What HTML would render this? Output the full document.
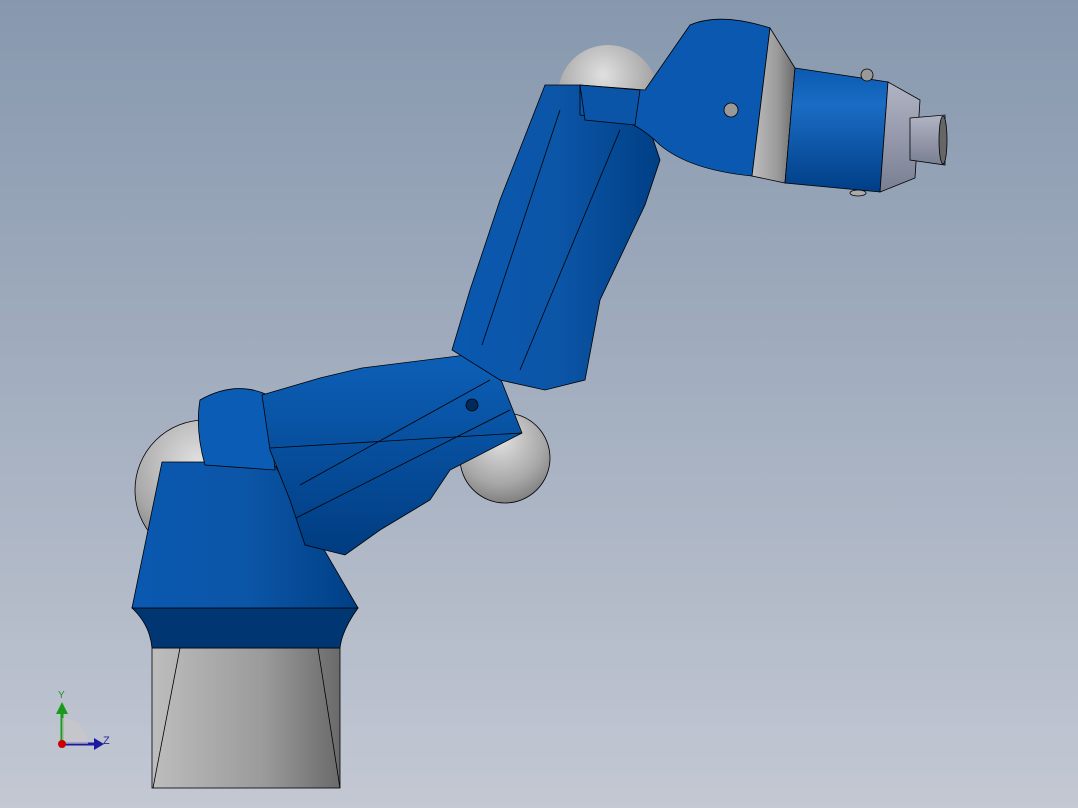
<!DOCTYPE html>
<html><head><style>
html,body{margin:0;padding:0;}
body{width:1078px;height:808px;overflow:hidden;background:linear-gradient(#8798ae 0%,#a4afc0 50%,#c3c8d3 100%);}
svg{position:absolute;left:0;top:0;}
</style></head><body>
<svg width="1078" height="808" viewBox="0 0 1078 808" font-family="Liberation Sans, sans-serif">
<defs>
<linearGradient id="gray" x1="0" x2="1"><stop offset="0" stop-color="#bdbdbd"/><stop offset="0.6" stop-color="#9a9a9a"/><stop offset="1" stop-color="#6a6a6a"/></linearGradient>
<radialGradient id="sph" cx="0.45" cy="0.3" r="0.8"><stop offset="0" stop-color="#e0e0e0"/><stop offset="0.6" stop-color="#a8a8a8"/><stop offset="1" stop-color="#707070"/></radialGradient>
<linearGradient id="blue" x1="0" x2="1"><stop offset="0" stop-color="#0a58b0"/><stop offset="0.5" stop-color="#0c56a8"/><stop offset="1" stop-color="#003f85"/></linearGradient>
<linearGradient id="blueV" x1="0" y1="0" x2="0" y2="1"><stop offset="0" stop-color="#0d60b8"/><stop offset="1" stop-color="#003c80"/></linearGradient>
<linearGradient id="cyl" x1="0" y1="0" x2="0" y2="1"><stop offset="0" stop-color="#0a5ab0"/><stop offset="0.3" stop-color="#1a6cc4"/><stop offset="1" stop-color="#003e86"/></linearGradient>
<linearGradient id="lg" x1="0" y1="0" x2="0" y2="1"><stop offset="0" stop-color="#b0b4c4"/><stop offset="1" stop-color="#7a7e92"/></linearGradient>
</defs>
<g stroke="#000" stroke-width="0.8">
<!-- spheres -->
<circle cx="205" cy="490" r="70" fill="url(#sph)"/>
<circle cx="505" cy="458" r="45" fill="url(#sph)"/>
<circle cx="608" cy="95" r="50" fill="url(#sph)" stroke="none"/>
<!-- base gray -->
<rect x="152" y="648" width="188" height="140" fill="url(#gray)"/>
<path d="M180 648 L153 788 M318 648 L340 788" fill="none"/>
<!-- collar -->
<path d="M132 608 L358 608 Q342 630 340 648 L152 648 Q150 625 132 608Z" fill="#003672"/>
<!-- cone -->
<path d="M162 462 L273 462 L358 608 L132 608Z" fill="url(#blue)"/>
<!-- shoulder -->
<path d="M200 400 Q235 380 268 395 L275 470 L205 465 Q195 430 200 400Z" fill="#0b5cb4"/>
<!-- lower arm -->
<path d="M262 395 L320 378 L362 368 L490 352 L522 433 L450 470 L430 500 L380 530 L345 555 L305 545 L290 500 L270 450Z" fill="url(#blueV)"/>
<path d="M270 448 L522 433 M300 485 L490 380 M296 518 L510 410" fill="none"/>
<circle cx="472" cy="405" r="6" fill="#002a5a"/>
<!-- upper arm -->
<path d="M452 350 L470 290 L500 200 L545 85 L580 85 L640 100 L660 160 L645 205 L600 300 L585 380 L545 390 L500 380Z" fill="url(#blue)"/>
<path d="M482 345 L560 110 M520 370 L620 130" fill="none"/>
<!-- wrist -->
<path d="M580 85 L645 90 L690 25 Q720 12 770 28 L752 176 Q690 170 660 145 Q640 125 620 120 L580 115Z" fill="#0a58b0"/>
<path d="M580 85 L640 90 L635 125 L585 120Z" fill="#0b55a8"/>
<circle cx="731" cy="110" r="7" fill="#999"/>
<!-- gray ring -->
<path d="M770 28 L795 68 L785 183 L752 176Z" fill="url(#gray)"/>
<!-- cylinder -->
<path d="M795 68 L888 82 L880 192 L785 183Z" fill="url(#cyl)"/>
<circle cx="867" cy="75" r="6" fill="#999"/>
<ellipse cx="858" cy="193" rx="8" ry="3" fill="#aaa"/>
<!-- end cone -->
<path d="M888 82 L920 100 L915 178 L880 192Z" fill="url(#lg)"/>
<path d="M910 118 L945 115 L945 165 L910 160Z" fill="url(#lg)"/>
<ellipse cx="943" cy="140" rx="4" ry="24" fill="#666"/>
</g>
<!-- triad -->
<g>
<line x1="62" y1="744" x2="62" y2="712" stroke="#1a9a1a" stroke-width="3"/>
<polygon points="56,714 68,714 62,702" fill="#1a9a1a"/>
<line x1="62" y1="744" x2="96" y2="744" stroke="#1a1aa0" stroke-width="3"/>
<polygon points="94,738 94,750 104,744" fill="#1a1aa0"/>
<path d="M62 744 L62 718 A26 26 0 0 1 88 744Z" fill="#c8c8c8" opacity="0.6"/>
<circle cx="62" cy="744" r="4" fill="#c00"/>
<text x="58" y="698" font-size="10" fill="#2a8a2a">Y</text>
<text x="103" y="744" font-size="11" fill="#2a2a90">Z</text>
</g>
</svg>
</body></html>
